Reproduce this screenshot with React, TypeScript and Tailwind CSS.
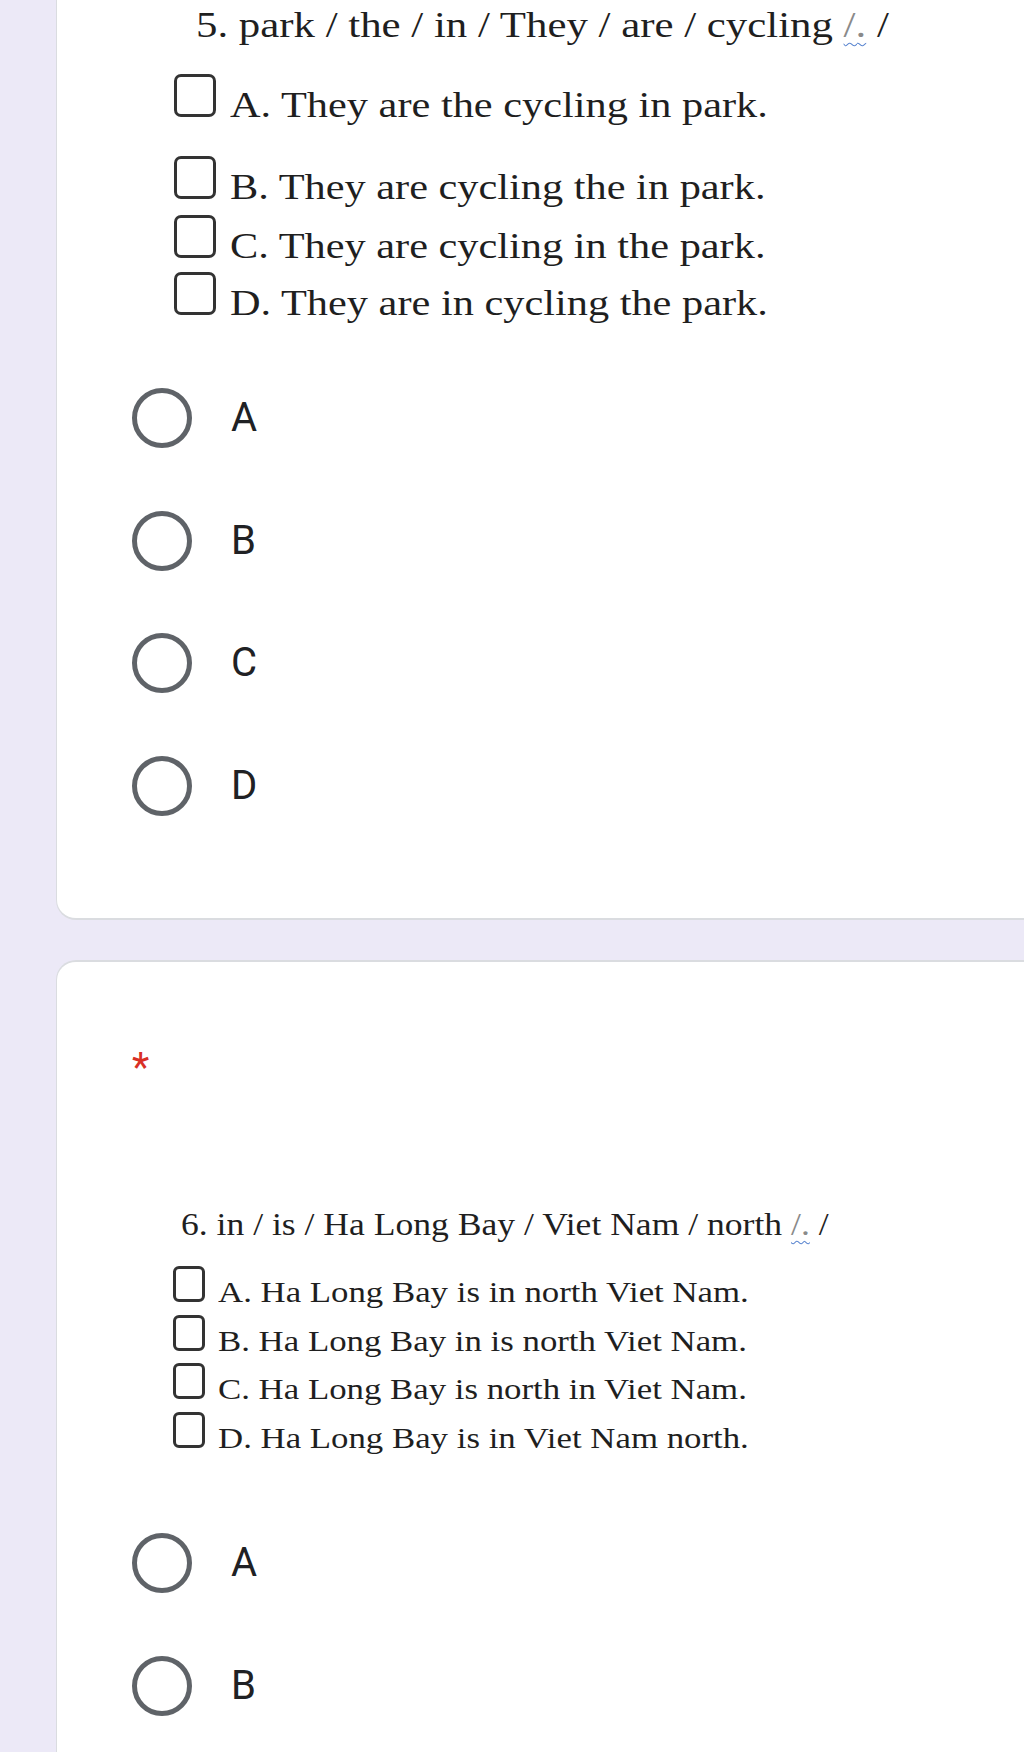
const serif = "font-['Liberation_Serif','Times_New_Roman',serif] text-[#1f1f1f]";

const q5Options = [
  { text: 'A. They are the cycling in park.', row: 'h-[82px]' },
  { text: 'B. They are cycling the in park.', row: 'h-[59px]' },
  { text: 'C. They are cycling in the park.', row: 'h-[57px]' },
  { text: 'D. They are in cycling the park.', row: 'h-[85px]' },
];

const q6Options = [
  { text: 'A. Ha Long Bay is in north Viet Nam.', row: 'h-[49px]' },
  { text: 'B. Ha Long Bay in is north Viet Nam.', row: 'h-[48px]' },
  { text: 'C. Ha Long Bay is north in Viet Nam.', row: 'h-[49px]' },
  { text: 'D. Ha Long Bay is in Viet Nam north.', row: 'h-[90px]' },
];

function Squiggle() {
  // spell-check mark copied along with the pasted question
  return (
    <span className="text-[#8a8a8a] underline decoration-wavy decoration-[#5b86d0] decoration-1 underline-offset-[5px]">
      /.
    </span>
  );
}

function RadioList({ labels }: { labels: string[] }) {
  return (
    <div className="pl-[75px]">
      {labels.map((l) => (
        <div key={l} className="flex h-[122.5px] items-center gap-[39px]">
          <span className="h-[60px] w-[60px] shrink-0 rounded-full border-[5px] border-[#5f6368]" />
          <span className="font-['Roboto',sans-serif] text-[40px] leading-none text-[#202124]">{l}</span>
        </div>
      ))}
    </div>
  );
}

export default function App() {
  return (
    <div className="min-h-[1752px] overflow-hidden bg-[#ece9f7] pl-[56px]">
      <section className="h-[920px] rounded-bl-[20px] border-b-2 border-l border-[#dadce0] bg-white">
        <div className={`pl-[117px] ${serif}`}>
          <p className="h-[74px] whitespace-nowrap pl-[22px] pt-[3px]">
            <span className="inline-block origin-left scale-x-[1.19] text-[36px] leading-[44px]">
              5. park / the / in / They / are / cycling <Squiggle /> /
            </span>
          </p>
          {q5Options.map((o) => (
            <div key={o.text} className={`flex items-baseline ${o.row}`}>
              <span className="h-[43px] w-[42px] shrink-0 rounded-[7px] border-[3px] border-[#333]" />
              <span className="ml-[14px] inline-block origin-left scale-x-[1.21] whitespace-nowrap text-[35px] leading-none">
                {o.text}
              </span>
            </div>
          ))}
        </div>
        <RadioList labels={['A', 'B', 'C', 'D']} />
      </section>

      <section className="mt-[40px] min-h-[800px] rounded-tl-[20px] border-t-2 border-l border-[#dadce0] bg-white">
        <div className="h-[242px] pl-[75px] pt-[86px]">
          <span className="font-['Roboto',sans-serif] text-[40px] leading-none text-[#d93025]">*</span>
        </div>
        <div className={`pl-[116px] ${serif}`}>
          <p className="h-[62px] whitespace-nowrap pl-[8px]">
            <span className="inline-block origin-left scale-x-[1.095] text-[32.5px] leading-[40px]">
              6. in / is / Ha Long Bay / Viet Nam / north <Squiggle /> /
            </span>
          </p>
          {q6Options.map((o) => (
            <div key={o.text} className={`flex items-baseline ${o.row}`}>
              <span className="h-[36px] w-[32px] shrink-0 rounded-[6px] border-[3px] border-[#333]" />
              <span className="ml-[13px] inline-block origin-left scale-x-[1.2] whitespace-nowrap text-[29px] leading-none">
                {o.text}
              </span>
            </div>
          ))}
        </div>
        <RadioList labels={['A', 'B']} />
      </section>
    </div>
  );
}
